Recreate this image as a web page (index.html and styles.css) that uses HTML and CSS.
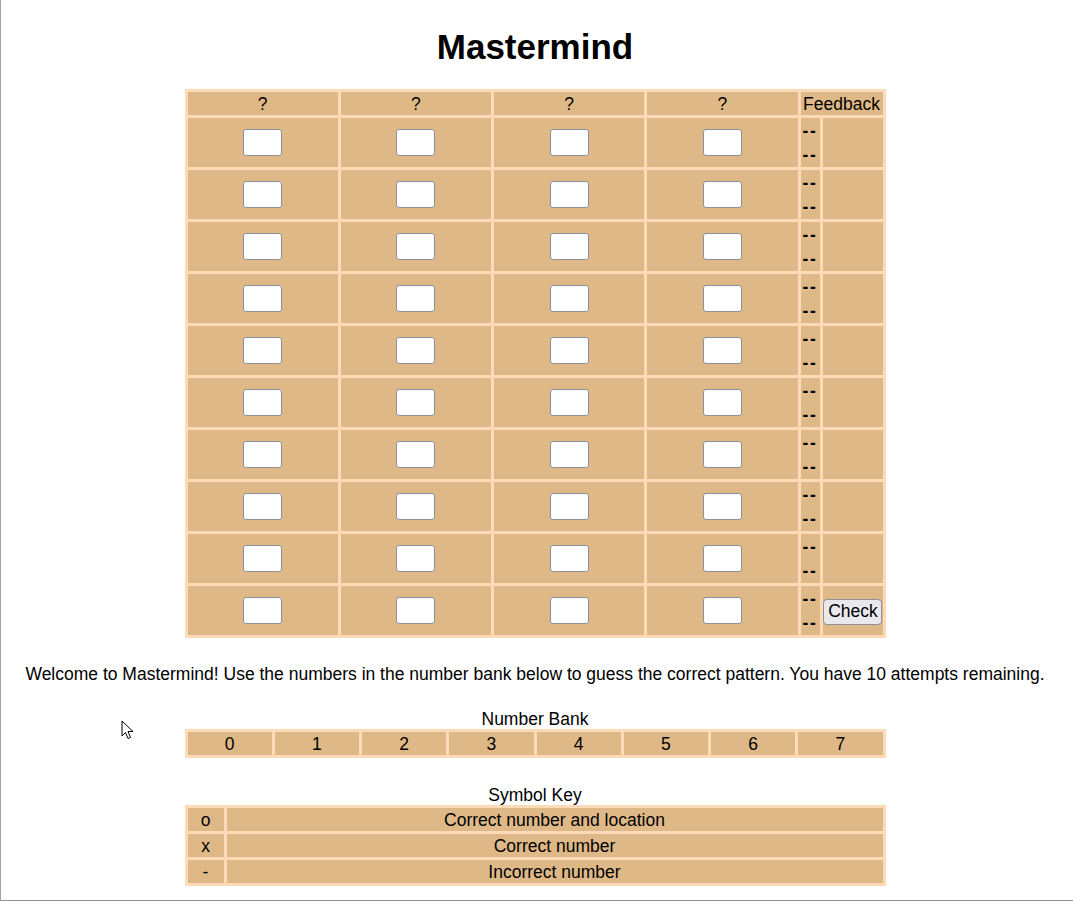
FILE: index.html
```html
<!DOCTYPE html>
<html>
<head>
<meta charset="utf-8">
<title>Mastermind</title>
<link rel="stylesheet" href="styles.css">
</head>
<body>
<div class="page">
  <h1 class="title">Mastermind</h1>
  <table class="board">
    <tr class="head">
      <td class="guess">?</td><td class="guess">?</td><td class="guess">?</td><td class="guess">?</td>
      <td colspan="2">Feedback</td>
    </tr>
    <tr><td class="guess"><input class="peg" type="text"></td><td class="guess"><input class="peg" type="text"></td><td class="guess"><input class="peg" type="text"></td><td class="guess"><input class="peg" type="text"></td><td class="fb"><div>--</div><div>--</div></td><td class="act"></td></tr>
    <tr><td class="guess"><input class="peg" type="text"></td><td class="guess"><input class="peg" type="text"></td><td class="guess"><input class="peg" type="text"></td><td class="guess"><input class="peg" type="text"></td><td class="fb"><div>--</div><div>--</div></td><td class="act"></td></tr>
    <tr><td class="guess"><input class="peg" type="text"></td><td class="guess"><input class="peg" type="text"></td><td class="guess"><input class="peg" type="text"></td><td class="guess"><input class="peg" type="text"></td><td class="fb"><div>--</div><div>--</div></td><td class="act"></td></tr>
    <tr><td class="guess"><input class="peg" type="text"></td><td class="guess"><input class="peg" type="text"></td><td class="guess"><input class="peg" type="text"></td><td class="guess"><input class="peg" type="text"></td><td class="fb"><div>--</div><div>--</div></td><td class="act"></td></tr>
    <tr><td class="guess"><input class="peg" type="text"></td><td class="guess"><input class="peg" type="text"></td><td class="guess"><input class="peg" type="text"></td><td class="guess"><input class="peg" type="text"></td><td class="fb"><div>--</div><div>--</div></td><td class="act"></td></tr>
    <tr><td class="guess"><input class="peg" type="text"></td><td class="guess"><input class="peg" type="text"></td><td class="guess"><input class="peg" type="text"></td><td class="guess"><input class="peg" type="text"></td><td class="fb"><div>--</div><div>--</div></td><td class="act"></td></tr>
    <tr><td class="guess"><input class="peg" type="text"></td><td class="guess"><input class="peg" type="text"></td><td class="guess"><input class="peg" type="text"></td><td class="guess"><input class="peg" type="text"></td><td class="fb"><div>--</div><div>--</div></td><td class="act"></td></tr>
    <tr><td class="guess"><input class="peg" type="text"></td><td class="guess"><input class="peg" type="text"></td><td class="guess"><input class="peg" type="text"></td><td class="guess"><input class="peg" type="text"></td><td class="fb"><div>--</div><div>--</div></td><td class="act"></td></tr>
    <tr><td class="guess"><input class="peg" type="text"></td><td class="guess"><input class="peg" type="text"></td><td class="guess"><input class="peg" type="text"></td><td class="guess"><input class="peg" type="text"></td><td class="fb"><div>--</div><div>--</div></td><td class="act"></td></tr>
    <tr><td class="guess"><input class="peg" type="text"></td><td class="guess"><input class="peg" type="text"></td><td class="guess"><input class="peg" type="text"></td><td class="guess"><input class="peg" type="text"></td><td class="fb"><div>--</div><div>--</div></td><td class="act"><button class="check" type="button">Check</button></td></tr>
  </table>

  <p class="msg">Welcome to Mastermind! Use the numbers in the number bank below to guess the correct pattern. You have 10 attempts remaining.</p>

  <table class="bank">
    <caption>Number Bank</caption>
    <tr><td>0</td><td>1</td><td>2</td><td>3</td><td>4</td><td>5</td><td>6</td><td>7</td></tr>
  </table>

  <table class="key">
    <caption>Symbol Key</caption>
    <tr><td class="sym">o</td><td>Correct number and location</td></tr>
    <tr><td class="sym">x</td><td>Correct number</td></tr>
    <tr><td class="sym">-</td><td>Incorrect number</td></tr>
  </table>

  <svg class="cursor" width="14" height="21" viewBox="0 0 14 21" xmlns="http://www.w3.org/2000/svg">
    <path d="M1 1 L1 16 L4.5 12.5 L7 18.5 L9.5 17.5 L7 11.5 L12 11.5 Z" fill="#ffffff" stroke="#000000" stroke-width="1" stroke-linejoin="miter"/>
  </svg>
</div>
</body>
</html>
```

FILE: styles.css
```css
html, body {
  margin: 0;
  padding: 0;
  background: #ffffff;
}

.page {
  position: relative;
  box-sizing: border-box;
  height: 901px;
  padding: 8px 12px 8px 8px;
  border-left: 1px solid #a3a3a3;
  border-bottom: 1px solid #8e8e96;
  font-family: "Liberation Sans", Arial, sans-serif;
  font-size: 17.5px;
  line-height: 20px;
  color: #000000;
  overflow: hidden;
}

.title {
  font-size: 35px;
  font-weight: bold;
  text-align: center;
  margin: 20px 0 24px 0;
  line-height: 37px;
}

table {
  border-collapse: separate;
  border-spacing: 3px;
  background: #ffdab9;
  margin: 0 auto;
  width: 701px;
  font-size: 17.5px;
  line-height: 20px;
}

td {
  background: #deb887;
  text-align: center;
  padding: 1px;
}

.board .head td {
  height: 21px;
  padding: 1px;
}

.board .guess {
  width: 151px;
  height: 49px;
  padding: 0;
}

.board .fb {
  width: 18px;
  padding: 0 0 0 2px;
  text-align: left;
  font-weight: bold;
  letter-spacing: 1.5px;
}

.board .fb div {
  line-height: 24px;
}

.board .act {
  width: 59px;
  padding: 0;
}

.peg {
  box-sizing: border-box;
  width: 39px;
  height: 27px;
  border: 1px solid #8f8f9d;
  border-radius: 3px;
  background: #ffffff;
  padding: 1px 2px;
  margin: 0;
  vertical-align: middle;
}

.check {
  box-sizing: border-box;
  width: 59px;
  height: 26px;
  font-family: "Liberation Sans", Arial, sans-serif;
  font-size: 17.5px;
  color: #000000;
  background: #e9e9ed;
  border: 1px solid #8f8f9d;
  border-radius: 4px;
  padding: 1px 2px;
  margin: 2px 0 0 0;
}

.msg {
  text-align: center;
  margin: 26px 0 25px 0;
}

.bank td {
  height: 21px;
  padding: 1px 0;
  width: 12.5%;
}

.bank {
  margin-bottom: 27px;
}

.key td {
  height: 21px;
  padding: 1px;
}

.key .sym {
  width: 34px;
}

.cursor {
  position: absolute;
  left: 120px;
  top: 720px;
}
```
